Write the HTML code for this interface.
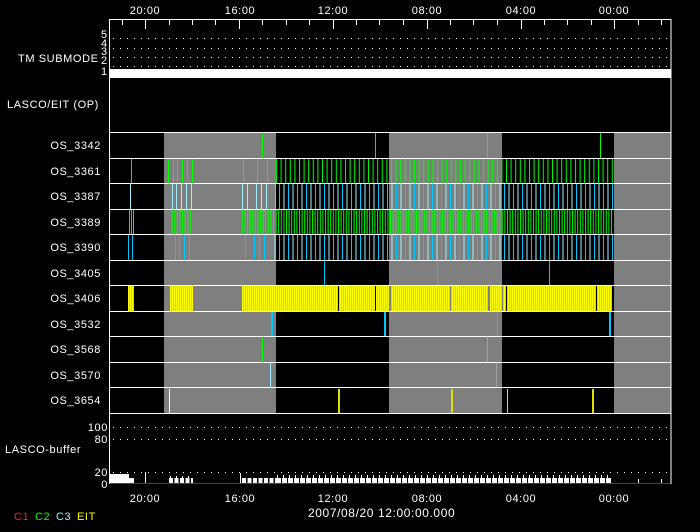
<!DOCTYPE html>
<html><head><style>
html,body{margin:0;padding:0;background:#000;width:700px;height:532px;overflow:hidden}
svg{display:block}
text{font-family:"Liberation Sans",sans-serif;font-size:11px;fill:#fff;letter-spacing:0.6px}
</style></head><body>
<svg width="700" height="532" xmlns="http://www.w3.org/2000/svg">
<defs>
<pattern id="g45" patternUnits="userSpaceOnUse" width="4.6" height="10"><rect x="0" y="0" width="1" height="10" fill="#00ff00"/></pattern>
<pattern id="c45" patternUnits="userSpaceOnUse" width="9" height="10"><rect x="0" y="0" width="1" height="10" fill="#00c8ff"/><rect x="4.5" y="0" width="1" height="10" fill="#a0f0ff"/></pattern>
<pattern id="g25" patternUnits="userSpaceOnUse" width="2.6" height="10"><rect x="0" y="0" width="1" height="10" fill="#00ff00"/></pattern>
<pattern id="y2" patternUnits="userSpaceOnUse" width="2" height="10"><rect x="0" y="0" width="2" height="10" fill="#ffff00"/><rect x="1.3" y="0" width="0.7" height="10" fill="#c8c800"/></pattern>
</defs>

<text x="145" y="14" text-anchor="middle">20:00</text>
<text x="240" y="14" text-anchor="middle">16:00</text>
<text x="333" y="14" text-anchor="middle">12:00</text>
<text x="427" y="14" text-anchor="middle">08:00</text>
<text x="521" y="14" text-anchor="middle">04:00</text>
<text x="614" y="14" text-anchor="middle">00:00</text>

<rect x="164" y="132" width="112" height="281" fill="#7f7f7f"/>
<rect x="389" y="132" width="113" height="281" fill="#7f7f7f"/>
<rect x="614" y="132" width="57" height="281" fill="#7f7f7f"/>

<g stroke="#fff" stroke-width="1" stroke-dasharray="1 6">
<line x1="113" y1="38.5" x2="670" y2="38.5"/>
<line x1="113" y1="48.5" x2="670" y2="48.5"/>
<line x1="113" y1="57.5" x2="670" y2="57.5"/>
<line x1="113" y1="66.5" x2="670" y2="66.5"/>
<line x1="113" y1="427.5" x2="670" y2="427.5"/>
<line x1="113" y1="439.5" x2="670" y2="439.5"/>
<line x1="113" y1="472.5" x2="670" y2="472.5"/>
</g>
<rect x="109" y="69" width="562" height="8" fill="#fff"/>
<text x="18" y="62">TM SUBMODE</text>
<g style="font-size:9px;letter-spacing:0"><text x="101" y="38">5</text><text x="101" y="47">4</text><text x="101" y="55">3</text><text x="101" y="64">2</text><text x="101" y="75">1</text></g>

<text x="7" y="108">LASCO/EIT (OP)</text>

<g fill="#00ff00"><rect x="262" y="133" width="1" height="25"/><rect x="375" y="133" width="1" height="25"/><rect x="487" y="133" width="1" height="25"/><rect x="600" y="133" width="1" height="25"/></g>
<g fill="#00ff00">
<rect x="131" y="159" width="1" height="24"/><rect x="168" y="159" width="1" height="24"/><rect x="173" y="159" width="1" height="24"/><rect x="177" y="159" width="1" height="24"/><rect x="182" y="159" width="1" height="24"/><rect x="187" y="159" width="1" height="24"/><rect x="192" y="159" width="1" height="24"/><rect x="243" y="159" width="1" height="24"/><rect x="257" y="159" width="1" height="24"/><rect x="267" y="159" width="1" height="24"/></g>
<rect x="276" y="159" width="112" height="24" fill="url(#g45)"/>
<rect x="389" y="159" width="224" height="24" fill="url(#g45)"/>
<g fill="#a0f0ff"><rect x="130" y="184" width="1" height="25"/><rect x="172" y="184" width="1" height="25"/><rect x="176" y="184" width="1" height="25"/><rect x="181" y="184" width="1" height="25"/><rect x="186" y="184" width="1" height="25"/><rect x="191" y="184" width="1" height="25"/><rect x="242" y="184" width="1" height="25"/><rect x="247" y="184" width="1" height="25"/><rect x="256" y="184" width="1" height="25"/><rect x="261" y="184" width="1" height="25"/><rect x="266" y="184" width="1" height="25"/></g>
<rect x="275" y="184" width="113" height="25" fill="url(#c45)"/>
<rect x="389" y="184" width="224" height="25" fill="url(#c45)"/>
<g fill="#00ff00"><rect x="129" y="210" width="1" height="24"/><rect x="131" y="210" width="1" height="24"/><rect x="133" y="210" width="1" height="24"/></g>
<rect x="171" y="210" width="20" height="24" fill="url(#g25)"/>
<rect x="241" y="210" width="33" height="24" fill="url(#g25)"/>
<rect x="276" y="210" width="337" height="24" fill="url(#g25)"/>
<g fill="#00c8ff"><rect x="128" y="235" width="1" height="25"/><rect x="132" y="235" width="1" height="25"/><rect x="175" y="235" width="1" height="25"/><rect x="179" y="235" width="1" height="25"/><rect x="184" y="235" width="1" height="25"/><rect x="189" y="235" width="1" height="25"/><rect x="245" y="235" width="1" height="25"/><rect x="254" y="235" width="1" height="25"/><rect x="259" y="235" width="1" height="25"/><rect x="264" y="235" width="1" height="25"/></g>
<rect x="273" y="235" width="115" height="25" fill="url(#c45)"/>
<rect x="390" y="235" width="224" height="25" fill="url(#c45)"/>
<g fill="#00c8ff"><rect x="324" y="261" width="1" height="24"/><rect x="437" y="261" width="1" height="24"/><rect x="549" y="261" width="1" height="24"/></g>
<rect x="128" y="286" width="6" height="25" fill="url(#y2)"/>
<rect x="170" y="286" width="23" height="25" fill="url(#y2)"/>
<rect x="242" y="286" width="34" height="25" fill="url(#y2)"/>
<rect x="276" y="286" width="336" height="25" fill="url(#y2)"/>
<g fill="#000"><rect x="338" y="286" width="1" height="25"/><rect x="375" y="286" width="1" height="25"/><rect x="506" y="286" width="1" height="25"/><rect x="596" y="286" width="1" height="25"/></g>
<g fill="#7f7f7f"><rect x="389" y="286" width="2" height="25"/><rect x="450" y="286" width="1" height="25"/><rect x="488" y="286" width="2" height="25"/><rect x="502" y="286" width="1" height="25"/></g>
<g fill="#00c8ff"><rect x="271" y="312" width="2" height="24"/><rect x="384" y="312" width="2" height="24"/><rect x="497" y="312" width="1" height="24"/><rect x="609" y="312" width="2" height="24"/></g>
<rect x="262" y="337" width="1" height="25" fill="#00ff00"/><rect x="487" y="337" width="1" height="25" fill="#a0a0a0"/>
<rect x="270" y="363" width="1" height="25" fill="#a0f0ff"/><rect x="496" y="363" width="1" height="25" fill="#a0a0a0"/>
<g fill="#e0e000"><rect x="169" y="389" width="1" height="24" fill="#fff"/><rect x="338" y="389" width="2" height="24"/><rect x="451" y="389" width="2" height="24"/><rect x="507" y="389" width="1" height="24"/><rect x="592" y="389" width="2" height="24"/></g>

<g fill="#fff">
<rect x="109" y="132" width="562" height="1"/><rect x="109" y="158" width="562" height="1"/><rect x="109" y="183" width="562" height="1"/><rect x="109" y="209" width="562" height="1"/><rect x="109" y="234" width="562" height="1"/><rect x="109" y="260" width="562" height="1"/><rect x="109" y="285" width="562" height="1"/><rect x="109" y="311" width="562" height="1"/><rect x="109" y="336" width="562" height="1"/><rect x="109" y="362" width="562" height="1"/><rect x="109" y="387" width="562" height="1"/><rect x="109" y="413" width="562" height="1"/>
</g>
<g>
<text x="101" y="149" text-anchor="end">OS_3342</text>
<text x="101" y="175" text-anchor="end">OS_3361</text>
<text x="101" y="200" text-anchor="end">OS_3387</text>
<text x="101" y="226" text-anchor="end">OS_3389</text>
<text x="101" y="251" text-anchor="end">OS_3390</text>
<text x="101" y="277" text-anchor="end">OS_3405</text>
<text x="101" y="302" text-anchor="end">OS_3406</text>
<text x="101" y="328" text-anchor="end">OS_3532</text>
<text x="101" y="353" text-anchor="end">OS_3568</text>
<text x="101" y="379" text-anchor="end">OS_3570</text>
<text x="101" y="404" text-anchor="end">OS_3654</text>
</g>

<!-- buffer -->
<rect x="109" y="474" width="20" height="9" fill="#fff"/>
<rect x="129" y="478" width="5" height="5" fill="#fff"/>
<g stroke="#fff">
<line x1="169" y1="480.5" x2="193" y2="480.5" stroke-width="5" stroke-dasharray="4 1.5"/>
<line x1="170" y1="479.5" x2="193" y2="479.5" stroke-width="7" stroke-dasharray="1 5"/>
<line x1="242" y1="480.5" x2="276" y2="480.5" stroke-width="5" stroke-dasharray="4 1.5"/>
<line x1="276" y1="480.5" x2="612" y2="480.5" stroke-width="5" stroke-dasharray="5 1"/>
<line x1="277" y1="479" x2="612" y2="479" stroke-width="8" stroke-dasharray="1 5"/>
<line x1="145.5" y1="472" x2="145.5" y2="483"/>
<line x1="240.5" y1="473" x2="240.5" y2="483"/>
<line x1="638.5" y1="479" x2="638.5" y2="483"/>
<line x1="661.5" y1="479" x2="661.5" y2="483"/>
</g>
<rect x="109" y="483" width="562" height="1" fill="#e00000"/>
<text x="5" y="453">LASCO-buffer</text>
<g style="font-size:10px"><text x="108" y="431" text-anchor="end">100</text><text x="108" y="443" text-anchor="end">80</text><text x="108" y="476" text-anchor="end">20</text><text x="108" y="488" text-anchor="end">0</text></g>

<rect x="109" y="19" width="1" height="465" fill="#fff"/>
<rect x="670.5" y="19" width="1" height="465" fill="#fff"/>
<rect x="109" y="19" width="562" height="1" fill="#fff"/>
<rect x="109" y="77" width="562" height="1" fill="#fff"/>
<g fill="#fff">
<rect x="122" y="20" width="1" height="5"/><rect x="145" y="20" width="1" height="9"/><rect x="169" y="20" width="1" height="5"/><rect x="192" y="20" width="1" height="5"/><rect x="215" y="20" width="1" height="5"/><rect x="239" y="20" width="1" height="9"/><rect x="262" y="20" width="1" height="5"/><rect x="286" y="20" width="1" height="5"/><rect x="309" y="20" width="1" height="5"/><rect x="333" y="20" width="1" height="9"/><rect x="356" y="20" width="1" height="5"/><rect x="379" y="20" width="1" height="5"/><rect x="403" y="20" width="1" height="5"/><rect x="427" y="20" width="1" height="9"/><rect x="450" y="20" width="1" height="5"/><rect x="473" y="20" width="1" height="5"/><rect x="497" y="20" width="1" height="5"/><rect x="521" y="20" width="1" height="9"/><rect x="544" y="20" width="1" height="5"/><rect x="567" y="20" width="1" height="5"/><rect x="591" y="20" width="1" height="5"/><rect x="614" y="20" width="1" height="9"/><rect x="638" y="20" width="1" height="5"/><rect x="661" y="20" width="1" height="5"/>
</g>

<text x="145" y="502" text-anchor="middle">20:00</text>
<text x="240" y="502" text-anchor="middle">16:00</text>
<text x="333" y="502" text-anchor="middle">12:00</text>
<text x="427" y="502" text-anchor="middle">08:00</text>
<text x="521" y="502" text-anchor="middle">04:00</text>
<text x="614" y="502" text-anchor="middle">00:00</text>
<text x="308" y="517" style="font-size:12px">2007/08/20 12:00:00.000</text>
<g style="font-size:9px"><text x="14" y="520" style="fill:#ff2020">C1</text><text x="35" y="520" style="fill:#00ff00">C2</text><text x="56" y="520" style="fill:#a0f0ff">C3</text><text x="77" y="520" style="fill:#ffff00">EIT</text></g>
</svg>
</body></html>
